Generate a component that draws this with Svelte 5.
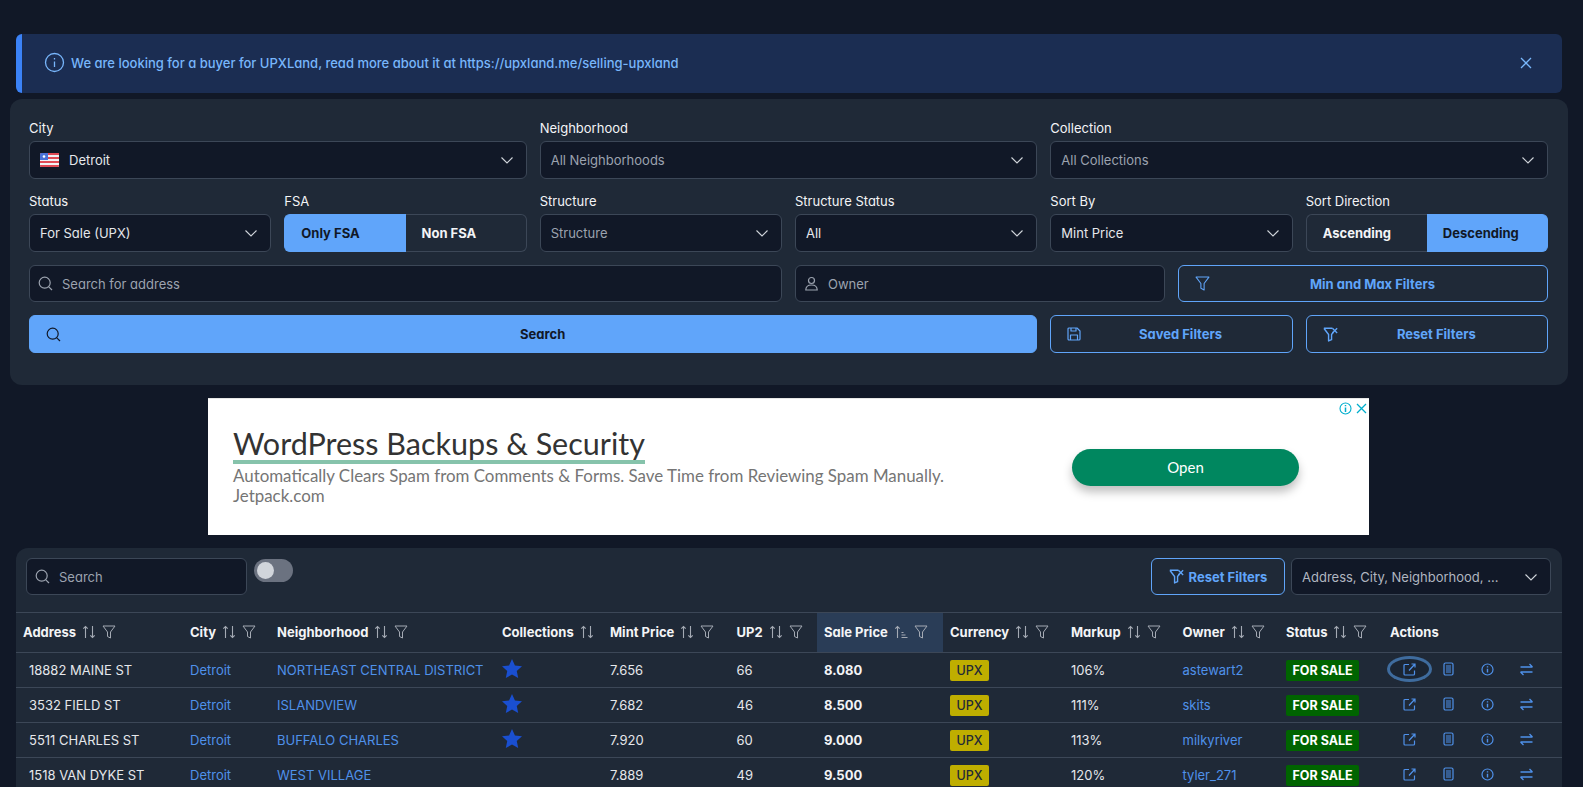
<script>
	const sortCols = [
		{ name: 'Address', filter: true },
		{ name: 'City', filter: true },
		{ name: 'Neighborhood', filter: true },
		{ name: 'Collections', filter: false },
		{ name: 'Mint Price', filter: true },
		{ name: 'UP2', filter: true },
		{ name: 'Sale Price', filter: true, active: true },
		{ name: 'Currency', filter: true },
		{ name: 'Markup', filter: true },
		{ name: 'Owner', filter: true },
		{ name: 'Status', filter: true }
	];
	const widths = [167, 87, 225, 108, 126.5, 87.5, 126, 121, 111.5, 103.5, 104, 179];

	const rows = [
		{ address: '18882 MAINE ST', hood: 'NORTHEAST CENTRAL DISTRICT', star: true, mint: '7.656', up2: 66, sale: '8.080', markup: '106%', owner: 'astewart2' },
		{ address: '3532 FIELD ST', hood: 'ISLANDVIEW', star: true, mint: '7.682', up2: 46, sale: '8.500', markup: '111%', owner: 'skits' },
		{ address: '5511 CHARLES ST', hood: 'BUFFALO CHARLES', star: true, mint: '7.920', up2: 60, sale: '9.000', markup: '113%', owner: 'milkyriver' },
		{ address: '1518 VAN DYKE ST', hood: 'WEST VILLAGE', star: false, mint: '7.889', up2: 49, sale: '9.500', markup: '120%', owner: 'tyler_271' }
	];
</script>

{#snippet chevron()}
	<svg class="chev" width="14" height="14" viewBox="0 0 14 14" fill="none" stroke="currentColor" stroke-width="1.1"><path d="M1.5 4.5 7 10l5.500-5.500" /></svg>
{/snippet}

{#snippet search(size = 15)}
	<svg width={size} height={size} viewBox="0 0 15 15" fill="none" stroke="currentColor" stroke-width="1.2"><circle cx="6.700" cy="6.700" r="5.500" /><path d="m10.800 10.800 3.200 3.200" /></svg>
{/snippet}

{#snippet funnel(size = 14)}
	<svg width={size} height={size} viewBox="0 0 14 14" fill="none" stroke="currentColor" stroke-width="1" stroke-linejoin="round"><path d="M1 1h12L8.500 7v6l-3-1.500V7z" /></svg>
{/snippet}

{#snippet funnelOff(size = 14)}
	<svg width={size} height={size} viewBox="0 0 14 14" fill="none" stroke="currentColor" stroke-width="1.300" stroke-linejoin="round"><path d="M.8 1.200h8M.8 1.200l4.400 5.800v6l2.800-1.200V7l1.800-2.300" /><path d="m8.800 1.200 4.400 4.400M13.200 1.200 8.800 5.600" /></svg>
{/snippet}

{#snippet sortIcon(active)}
	<svg width="14" height="14" viewBox="0 0 14 14" fill="none" stroke="currentColor" stroke-width="1.1">
		<path d="M3.500 13V1.500M1.300 3.700 3.500 1.500l2.200 2.200" />
		{#if active}
			<path d="M7.500 7.500h2M7.500 10h4M7.500 12.500h6" />
		{:else}
			<path d="M10.500 1v11.500M8.300 10.300l2.200 2.200 2.200-2.200" />
		{/if}
	</svg>
{/snippet}

<div class="page">
	<div class="alert">
		<svg width="21" height="21" viewBox="0 0 21 21" fill="none" stroke="currentColor" stroke-width="1.300"><circle cx="10.500" cy="10.500" r="9" /><path d="M10.500 9.500v5.500M10.500 6v1.400" /></svg>
		<span class="alert-text">We are looking for a buyer for UPXLand, read more about it at https://upxland.me/selling-upxland</span>
		<svg class="close" width="12" height="12" viewBox="0 0 12 12" fill="none" stroke="currentColor" stroke-width="1.300"><path d="m1 1 10 10M11 1 1 11" /></svg>
	</div>

	<section class="filters">
		<div class="field s4">
			<span class="label">City</span>
			<div class="control">
				<svg class="flag" width="19" height="14" viewBox="0 0 19 14">
					<rect width="19" height="14" rx="1.500" fill="#f1f1f4" />
					<path d="M0 1.500A1.500 1.500 0 0 1 1.500 0H19v2H0zM8 4h11v2H8zM0 8h19v2H0zM0 12h19v.500a1.500 1.500 0 0 1-1.500 1.500h-16A1.500 1.500 0 0 1 0 12.500z" fill="#e04a55" />
					<path d="M1.500 0H8v7H0V1.500A1.500 1.500 0 0 1 1.500 0z" fill="#4a72d8" />
					<circle cx="4" cy="3.500" r="1.300" fill="#fff" />
				</svg>
				<span class="value">Detroit</span>
				{@render chevron()}
			</div>
		</div>
		<div class="field s4">
			<span class="label">Neighborhood</span>
			<div class="control"><span class="placeholder">All Neighborhoods</span>{@render chevron()}</div>
		</div>
		<div class="field s4">
			<span class="label">Collection</span>
			<div class="control"><span class="placeholder">All Collections</span>{@render chevron()}</div>
		</div>

		<div class="field s2">
			<span class="label">Status</span>
			<div class="control"><span class="value">For Sale (UPX)</span>{@render chevron()}</div>
		</div>
		<div class="field s2">
			<span class="label">FSA</span>
			<div class="toggle-group">
				<button class="seg on">Only FSA</button>
				<button class="seg">Non FSA</button>
			</div>
		</div>
		<div class="field s2">
			<span class="label">Structure</span>
			<div class="control"><span class="placeholder">Structure</span>{@render chevron()}</div>
		</div>
		<div class="field s2">
			<span class="label">Structure Status</span>
			<div class="control"><span class="value">All</span>{@render chevron()}</div>
		</div>
		<div class="field s2">
			<span class="label">Sort By</span>
			<div class="control"><span class="value">Mint Price</span>{@render chevron()}</div>
		</div>
		<div class="field s2">
			<span class="label">Sort Direction</span>
			<div class="toggle-group">
				<button class="seg">Ascending</button>
				<button class="seg on">Descending</button>
			</div>
		</div>

		<div class="control short s6">
			<span class="lead">{@render search()}</span>
			<span class="placeholder">Search for address</span>
		</div>
		<div class="control short s3">
			<span class="lead">
				<svg width="15" height="15" viewBox="0 0 15 15" fill="none" stroke="currentColor" stroke-width="1.200"><circle cx="7.500" cy="4.500" r="3" /><path d="M1.800 14c0-3.500 2.500-5 5.700-5s5.700 1.500 5.700 5z" /></svg>
			</span>
			<span class="placeholder">Owner</span>
		</div>
		<button class="btn outline short s3"><span class="ico">{@render funnel(15)}</span><span class="txt">Min and Max Filters</span></button>

		<button class="btn primary s8"><span class="ico">{@render search()}</span><span class="txt">Search</span></button>
		<button class="btn outline s2">
			<span class="ico">
				<svg width="14" height="14" viewBox="0 0 14 14" fill="none" stroke="currentColor" stroke-width="1.200" stroke-linejoin="round"><path d="M2 1h8l3 3v8a1 1 0 0 1-1 1H2a1 1 0 0 1-1-1V2a1 1 0 0 1 1-1z" /><path d="M4 1v3h5V1M3.500 13V8h7v5" /></svg>
			</span>
			<span class="txt">Saved Filters</span>
		</button>
		<button class="btn outline s2"><span class="ico">{@render funnelOff(15)}</span><span class="txt">Reset Filters</span></button>
	</section>

	<aside class="ad">
		<div class="ad-marks">
			<svg width="13" height="13" viewBox="0 0 13 13" fill="none" stroke="currentColor" stroke-width="1.100"><circle cx="6.500" cy="6.500" r="5.500" /><path d="M6.500 5.500v4.500M6.500 3v1.300" stroke-width="1.500" /></svg>
			<svg width="11" height="11" viewBox="0 0 11 11" fill="none" stroke="currentColor" stroke-width="1.300"><path d="m1 1 9 9M10 1l-9 9" /></svg>
		</div>
		<div class="ad-copy">
			<h2 class="ad-title">WordPress Backups &amp; Security</h2>
			<p class="ad-desc">Automatically Clears Spam from Comments &amp; Forms. Save Time from Reviewing Spam Manually.</p>
			<p class="ad-desc">Jetpack.com</p>
		</div>
		<button class="ad-open">Open</button>
	</aside>

	<section class="card">
		<div class="toolbar">
			<div class="control tb-search">
				<span class="lead">{@render search()}</span>
				<span class="placeholder">Search</span>
			</div>
			<div class="switch"><span class="knob"></span></div>
			<button class="btn outline tb-reset">{@render funnelOff(15)}<span>Reset Filters</span></button>
			<div class="control tb-cols"><span class="placeholder light">Address, City, Neighborhood, ...</span>{@render chevron()}</div>
		</div>

		<table>
			<colgroup>
				{#each widths as w}
					<col style="width: {w}px" />
				{/each}
			</colgroup>
			<thead>
				<tr>
					{#each sortCols as col}
						<th class:active={col.active}>
							<span class="th-inner">
								{col.name}
								<span class="th-icons">
									{@render sortIcon(col.active)}
									{#if col.filter}{@render funnel(14)}{/if}
								</span>
							</span>
						</th>
					{/each}
					<th>Actions</th>
				</tr>
			</thead>
			<tbody>
				{#each rows as row, i}
					<tr>
						<td class="addr">{row.address}</td>
						<td class="link">Detroit</td>
						<td class="link">{row.hood}</td>
						<td>
							{#if row.star}
								<svg class="star" width="20" height="20" viewBox="0 0 21 21"><path fill="#1a4fd0" d="m10.500 0 3.100 6.900 7.400.8-5.500 5 1.500 7.300-6.500-3.700L4 20l1.500-7.300-5.500-5 7.400-.8z" /></svg>
							{/if}
						</td>
						<td>{row.mint}</td>
						<td>{row.up2}</td>
						<td class="sale">{row.sale}</td>
						<td><span class="tag upx">UPX</span></td>
						<td>{row.markup}</td>
						<td class="link">{row.owner}</td>
						<td><span class="tag sale-tag">FOR SALE</span></td>
						<td class="actions">
							<div class="act-row">
								<span class="act" class:focus={i === 0}>
									<svg width="13" height="13" viewBox="0 0 13 13" fill="none" stroke="currentColor" stroke-width="1.200"><path d="M6 1.500H2a1 1 0 0 0-1 1V11a1 1 0 0 0 1 1h8.500a1 1 0 0 0 1-1V7.500" /><path d="M6 7.500 12 1M8.500 1H12v3.500" /></svg>
								</span>
								<span class="act">
									<svg width="13" height="14" viewBox="0 0 13 14" fill="none" stroke="currentColor" stroke-width="1.200"><rect x="2" y="1" width="9" height="12" rx="1.500" /><path d="M4 4h5M4 6h5M4 8h5M4 10h5" stroke-width="1" /></svg>
								</span>
								<span class="act">
									<svg width="13" height="13" viewBox="0 0 13 13" fill="none" stroke="currentColor" stroke-width="1.200"><circle cx="6.500" cy="6.500" r="5.500" /><path d="M6.500 5.800v3.700M6.500 3.300v1.200" stroke-width="1.400" /></svg>
								</span>
								<span class="act">
									<svg width="13" height="13" viewBox="0 0 13 13" fill="none" stroke="currentColor" stroke-width="1.300"><path d="M.500 4h12M9.500 1l3 3M12.500 9H.500M3.500 12l-3-3" /></svg>
								</span>
							</div>
						</td>
					</tr>
				{/each}
			</tbody>
		</table>
	</section>
</div>

<style>
	:global(body) {
		margin: 0;
		background: #111827;
		overflow: hidden;
	}

	.page {
		width: 1578px;
		height: 787px;
		overflow: hidden;
		padding-top: 34px;
		box-sizing: border-box;
		color: #f3f4f6;
		font-family: Inter, "Liberation Sans", sans-serif;
		font-feature-settings: "cv11" 1;
		font-size: 13px;
	}

	button {
		font-family: inherit;
		font-feature-settings: inherit;
		cursor: pointer;
	}

	.alert {
		display: flex;
		align-items: center;
		gap: 6px;
		height: 59px;
		box-sizing: border-box;
		margin: 0 16px 6px;
		padding: 0 30px 2px 22px;
		background: #1b2d52;
		border-left: 6px solid #3b82f6;
		border-radius: 6px;
		color: #78b6fb;
	}

	.alert-text {
		flex: 1;
		font-size: 13px;
		font-weight: 500;
	}

	.filters {
		display: grid;
		grid-template-columns: repeat(12, 1fr);
		gap: 13px 13px;
		margin: 0 10px;
		padding: 20px 20px 32px 19px;
		background: #1f2937;
		border-radius: 12px;
		height: 286px;
		box-sizing: border-box;
		align-content: start;
	}

	.s2 { grid-column: span 2; }
	.s3 { grid-column: span 3; }
	.s4 { grid-column: span 4; }
	.s6 { grid-column: span 6; }
	.s8 { grid-column: span 8; }

	.field {
		display: flex;
		flex-direction: column;
		gap: 4px;
	}

	.label {
		font-size: 13px;
		line-height: 18px;
		color: #f3f4f6;
	}

	.control {
		display: flex;
		align-items: center;
		height: 38px;
		box-sizing: border-box;
		padding: 0 11px 0 10px;
		background: #111827;
		border: 1px solid #3c4757;
		border-radius: 6px;
		color: #e5e7eb;
		font-size: 13px;
	}

	.control.short {
		height: 37px;
		padding-left: 8px;
	}

	.flag {
		margin-right: 10px;
		flex: none;
	}

	.value,
	.placeholder {
		flex: 1;
		white-space: nowrap;
	}

	.placeholder {
		color: #9ca3af;
	}

	.placeholder.light {
		color: #b0b6c0;
	}

	.chev {
		flex: none;
		color: #d1d5db;
		margin-right: 1px;
	}

	.lead {
		display: flex;
		margin-right: 9px;
		color: #9ca3af;
	}

	.toggle-group {
		display: flex;
		height: 38px;
	}

	.seg {
		flex: 1;
		padding: 0 0 0 16px;
		text-align: left;
		background: #1f2937;
		border: 1px solid #3c4757;
		color: #f3f4f6;
		font-size: 13px;
		font-weight: 700;
	}

	.seg:first-child {
		border-radius: 6px 0 0 6px;
		border-right: none;
	}

	.seg:last-child {
		border-radius: 0 6px 6px 0;
		border-left: none;
	}

	.seg.on {
		background: #60a5fa;
		border-color: #60a5fa;
		color: #111827;
	}

	.btn {
		display: flex;
		align-items: center;
		height: 38px;
		padding: 0 12px 0 16px;
		border-radius: 6px;
		font-size: 13px;
		font-weight: 700;
	}

	.btn.short {
		height: 37px;
	}

	.btn .ico {
		display: flex;
	}

	.btn .txt {
		flex: 1;
		text-align: center;
	}

	.btn.primary {
		background: #60a5fa;
		border: 1px solid #60a5fa;
		color: #111827;
	}

	.btn.outline {
		background: transparent;
		border: 1px solid #60a5fa;
		color: #60a5fa;
	}

	.ad {
		position: relative;
		display: flex;
		align-items: center;
		justify-content: space-between;
		box-sizing: border-box;
		width: 1161px;
		height: 137px;
		margin: 13px 0 13px 208px;
		padding: 0 70px 2px 25px;
		background: #fff;
		border-top: 1px solid #e6e6e6;
		font-family: Lato, "Open Sans", sans-serif;
		font-feature-settings: normal;
	}

	.ad-marks {
		position: absolute;
		top: 3px;
		right: 2px;
		display: flex;
		align-items: center;
		gap: 4px;
		color: #00aecd;
	}

	.ad-title {
		display: inline-block;
		margin: 0 0 2px;
		font-size: 30.500px;
		font-weight: 400;
		line-height: 34px;
		color: #333;
		border-bottom: 4px solid #86c3ab;
	}

	.ad-desc {
		margin: 0;
		font-size: 16.900px;
		line-height: 20px;
		color: #757575;
	}

	.ad-open {
		width: 227px;
		height: 37px;
		margin-top: 2px;
		border: none;
		border-radius: 19px;
		background: #00875f;
		color: #fff;
		font-size: 15px;
		font-family: inherit;
		box-shadow: 0 6px 10px rgba(0, 0, 0, 0.25);
	}

	.card {
		margin: 0 16px;
		background: #1f2937;
		border-radius: 12px 12px 0 0;
	}

	.toolbar {
		display: flex;
		align-items: flex-start;
		height: 65px;
		box-sizing: border-box;
		padding: 10px 11px 0 10px;
		border-bottom: 1px solid #3c4757;
	}

	.tb-search {
		width: 221px;
		height: 37px;
		padding-left: 8px;
	}

	.switch {
		width: 39px;
		height: 23px;
		margin: 1px 0 0 7px;
		border-radius: 12px;
		background: #6b7280;
		position: relative;
	}

	.knob {
		position: absolute;
		top: 3px;
		left: 3px;
		width: 17px;
		height: 17px;
		border-radius: 50%;
		background: #d1d5db;
	}

	.tb-reset {
		margin-left: auto;
		width: 134px;
		height: 37px;
		justify-content: center;
		gap: 5px;
		padding: 0;
	}

	.tb-cols {
		width: 260px;
		height: 37px;
		margin-left: 6px;
	}

	table {
		width: 1546px;
		table-layout: fixed;
		border-collapse: collapse;
	}

	th {
		height: 37px;
		padding: 0 0 2px 7px;
		text-align: left;
		font-size: 13px;
		font-weight: 700;
		color: #f3f4f6;
		border-bottom: 1px solid #3c4757;
		white-space: nowrap;
	}

	th.active {
		background: #2a3d57;
	}

	.th-inner {
		display: flex;
		align-items: center;
		gap: 6px;
	}

	.th-icons {
		display: flex;
		gap: 6px;
		color: #a4aab4;
	}

	td {
		height: 34px;
		padding: 0 0 0 7px;
		font-size: 13px;
		color: #e5e7eb;
		border-bottom: 1px solid #3c4757;
		white-space: nowrap;
	}

	td.addr {
		padding-left: 13px;
		font-feature-settings: normal;
	}

	td.link {
		color: #4f91ea;
		font-feature-settings: normal;
	}

	td.sale {
		font-weight: 700;
		color: #f3f4f6;
	}

	.star {
		display: block;
		margin-bottom: 3px;
	}

	.tag {
		display: inline-block;
		padding: 0 6.500px;
		height: 21px;
		line-height: 21px;
		border-radius: 2px;
		font-size: 12.500px;
		vertical-align: middle;
	}

	.upx {
		background: #bfae00;
		color: #1f2937;
		font-weight: 500;
	}

	.sale-tag {
		background: #006400;
		color: #fff;
		font-weight: 700;
	}

	.actions {
		padding-left: 7px;
	}

	.act-row {
		display: flex;
		margin-bottom: 2px;
	}

	.act {
		display: flex;
		align-items: center;
		justify-content: center;
		width: 39px;
		height: 20px;
		color: #4f91ea;
	}

	.act.focus {
		border-radius: 50%;
		box-shadow: 0 0 0 3px #3f6c9e;
		background: #1b2533;
	}

	.close {
		margin-left: auto;
	}
</style>
